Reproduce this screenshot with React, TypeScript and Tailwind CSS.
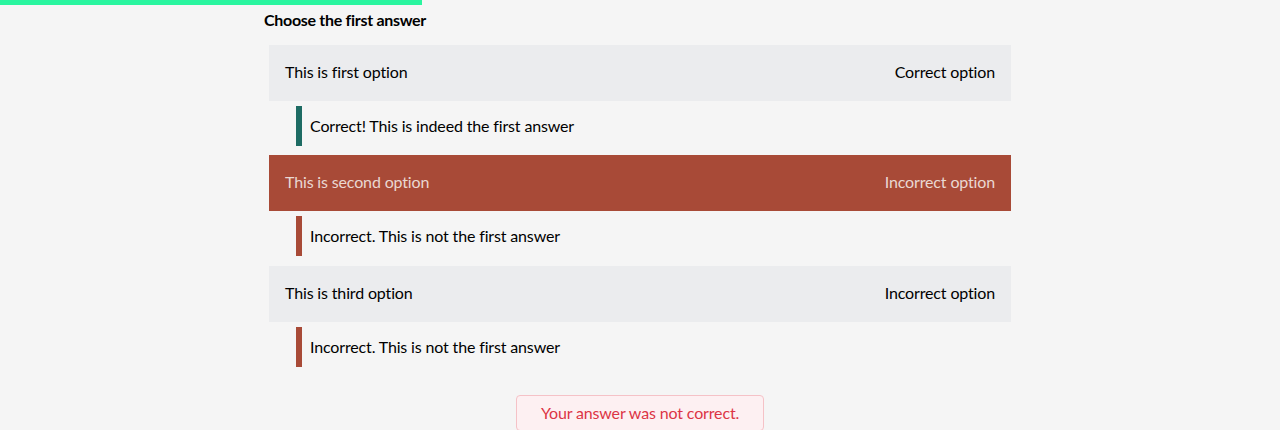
const options = [
  {
    label: "This is first option",
    status: "Correct option",
    feedback: "Correct! This is indeed the first answer",
    selected: false,
    correct: true,
  },
  {
    label: "This is second option",
    status: "Incorrect option",
    feedback: "Incorrect. This is not the first answer",
    selected: true,
    correct: false,
  },
  {
    label: "This is third option",
    status: "Incorrect option",
    feedback: "Incorrect. This is not the first answer",
    selected: false,
    correct: false,
  },
]

export default function App() {
  return (
    <main
      className="min-h-screen bg-[#f5f5f5] text-black tracking-[-0.15px]"
      style={{ fontFamily: "Lato, 'Open Sans', sans-serif" }}
    >
      <div className="h-[5px] w-[422px] bg-[#2af59f]"></div>
      <div className="mx-auto w-[752px]">
        <h2 className="mt-[3px] text-base font-bold leading-6 tracking-[-0.3px]">Choose the first answer</h2>
        <div className="mt-[13px] flex flex-col">
          {options.map((option, index) => (
            <div key={index} className={index === 1 ? "mb-[10px]" : "mb-[9px]"}>
              <div
                className={
                  option.selected
                    ? "mx-[5px] flex h-14 items-center justify-between bg-[#a84a37] px-4 pb-[2px] text-[#ead8d2]"
                    : "mx-[5px] flex h-14 items-center justify-between bg-[#ebecee] px-4 pb-[2px] text-black"
                }
              >
                <span>{option.label}</span>
                <span>{option.status}</span>
              </div>
              <div
                className={
                  option.correct
                    ? "ml-8 mt-[5px] flex h-10 items-center border-l-[6px] border-[#1d6b63] pl-2 pb-px"
                    : "ml-8 mt-[5px] flex h-10 items-center border-l-[6px] border-[#a84a37] pl-2 pb-px"
                }
              >
                {option.feedback}
              </div>
            </div>
          ))}
        </div>
        <div className="mt-[19px] flex justify-center">
          <div className="flex h-[36px] w-[248px] items-center justify-center rounded border border-[#f5c2c7] bg-[#fdf0f2] pb-px text-[#dc3545]">
            Your answer was not correct.
          </div>
        </div>
      </div>
    </main>
  )
}
